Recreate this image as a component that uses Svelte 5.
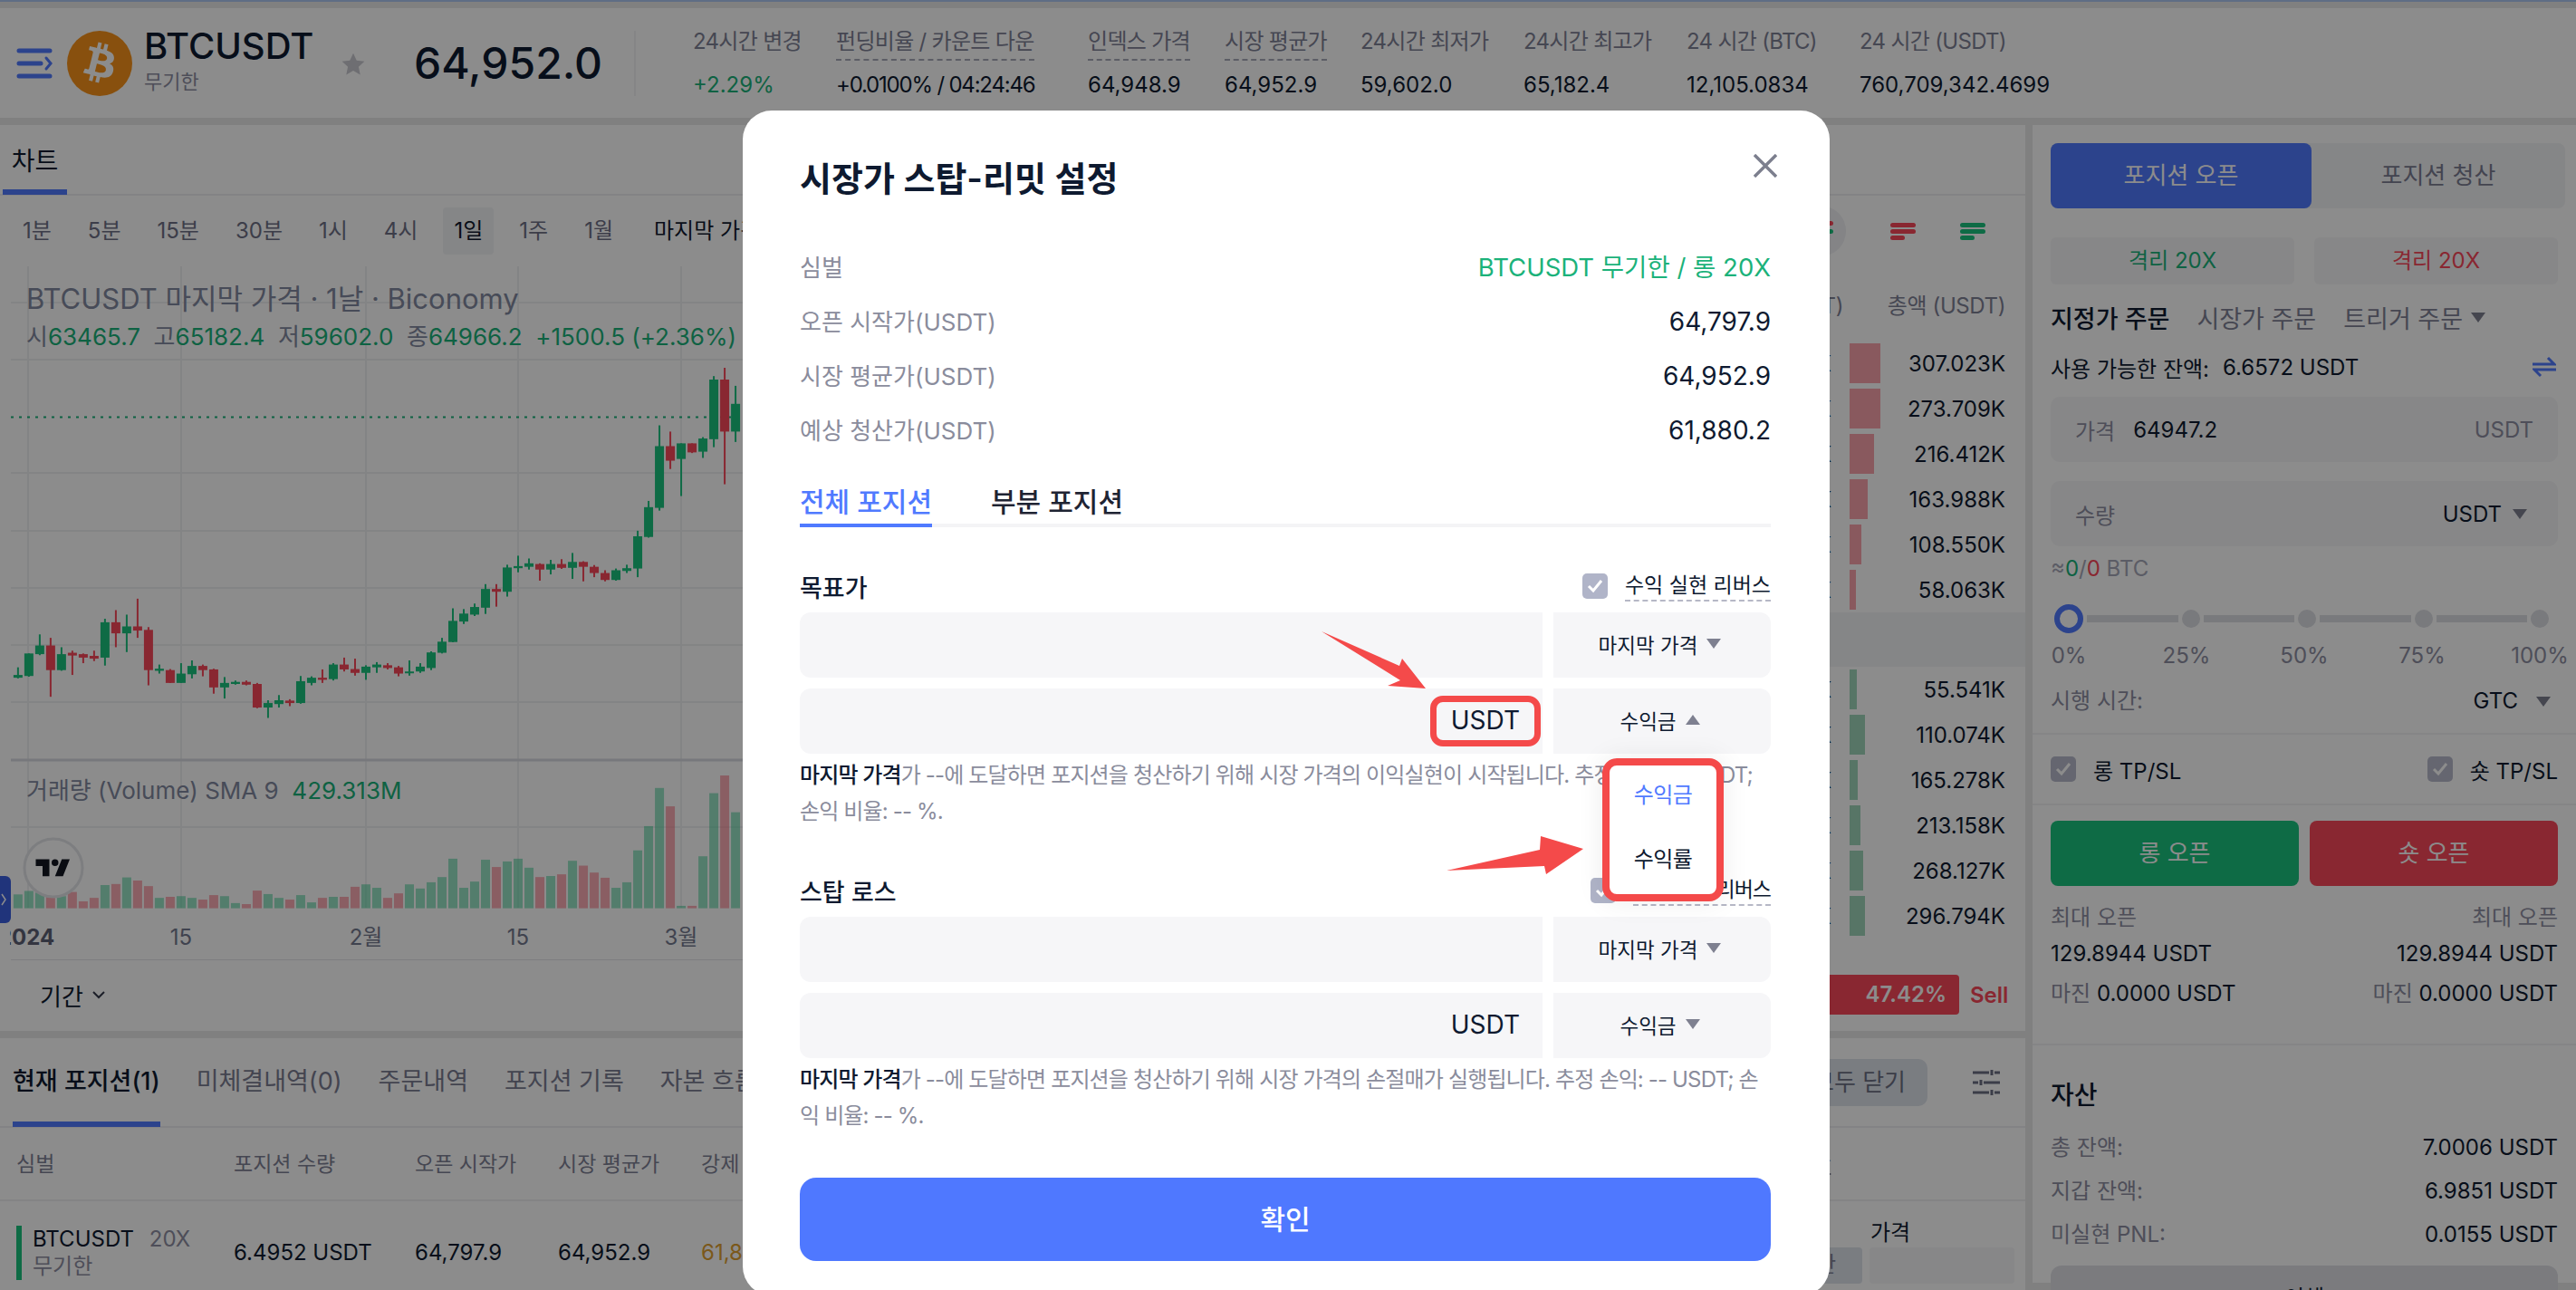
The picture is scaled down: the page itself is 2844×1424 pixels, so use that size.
<script>
  // candles read off the chart: [up, wick top, body top, body bottom, wick bottom], y in zoom units
  const raw = [
    [1,830,852,860,862],[1,790,790,855,857],[1,735,767,792,795],[0,745,767,838,915],[1,772,792,838,840],
    [0,782,788,796,852],[0,790,792,802,818],[0,782,797,805,812],[1,690,700,802,825],[0,665,700,732,772],
    [1,678,712,732,786],[0,632,712,724,745],[0,714,722,838,882],[1,822,834,840,848],[0,835,838,875,875],
    [1,818,848,875,875],[1,810,826,850,862],[0,822,826,838,856],[0,834,836,888,906],[1,858,875,888,920],
    [1,868,872,878,880],[0,868,872,880,882],[0,875,878,946,948],[1,925,933,946,976],[1,910,925,936,946],
    [0,922,926,933,942],[1,855,870,933,935],[1,856,860,875,882],[0,836,860,866,875],[1,818,822,864,868],
    [0,802,822,836,842],[0,805,835,846,854],[1,824,828,846,866],[1,815,822,830,846],[0,818,824,832,836],
    [0,826,830,848,856],[1,810,842,846,854],[1,818,828,842,846],[1,784,787,832,838],[1,745,756,788,790],
    [1,660,696,757,758],[1,662,675,698,705],[1,646,656,678,682],[1,590,604,658,676],[0,590,604,612,655],
    [1,534,542,612,626],[1,508,538,544,556],[1,516,530,540,548],[0,530,532,548,580],[1,520,532,548,562],
    [0,518,532,543,546],[1,500,526,543,575],[0,524,526,540,582],[0,535,540,558,570],[0,550,558,578,582],
    [1,545,550,578,580],[1,534,544,552,558],[1,436,452,545,570],[1,350,368,454,456],[1,132,192,370,378],
    [0,150,192,234,258],[1,184,184,229,336],[0,184,184,210,212],[1,166,170,208,226],[1,-10,0,172,195],
    [0,-34,0,150,302],[1,18,70,150,180]
  ];
  const volTops = [1485,1475,1480,1490,1490,1478,1505,1495,1458,1455,1436,1445,1461,1495,1492,1490,1495,1500,1487,1490,1510,1513,1474,1484,1495,1500,1487,1508,1495,1492,1492,1463,1456,1466,1495,1482,1456,1468,1450,1435,1382,1466,1448,1385,1406,1390,1382,1408,1435,1432,1427,1388,1402,1422,1437,1466,1450,1358,1288,1178,1231,1518,1518,1375,1193,1142,1248];

  const toX = (i) => (38 + i * 22.95) / 1.912;
  const toY = (z) => 420 + z / 2.613;
  const candles = raw.map((c, i) => ({
    x: toX(i), up: c[0], wt: toY(c[1]), bt: toY(c[2]), bb: toY(c[3]), wb: toY(c[4]),
    vt: toY(volTops[i])
  }));
  const volBase = toY(1525);

  const gridY = [335, 398, 523, 587, 650, 713, 776, 914];
  const gridX = [31, 200, 404, 572, 752];

  const times = ['1분', '5분', '15분', '30분', '1시', '4시', '1일', '1주', '1월'];
  const stats = [
    { label: '24시간 변경', value: '+2.29%', w: 158, up: true },
    { label: '펀딩비율 / 카운트 다운', value: '+0.0100% / 04:24:46', w: 278, dash: true, tight: true },
    { label: '인덱스 가격', value: '64,948.9', w: 151, dash: true },
    { label: '시장 평균가', value: '64,952.9', w: 150, dash: true },
    { label: '24시간 최저가', value: '59,602.0', w: 180 },
    { label: '24시간 최고가', value: '65,182.4', w: 180 },
    { label: '24 시간 (BTC)', value: '12,105.0834', w: 191 },
    { label: '24 시간 (USDT)', value: '760,709,342.4699', w: 320 }
  ];
  const asks = [['12.341K', 34, '307.023K'], ['10.402K', 34, '273.709K'], ['9.331K', 27, '216.412K'], ['8.120K', 20, '163.988K'], ['6.402K', 13, '108.550K'], ['3.112K', 7, '58.063K']];
  const bids = [['5.541K', 8, '55.541K'], ['8.433K', 17, '110.074K'], ['5.204K', 9, '165.278K'], ['6.880K', 12, '213.158K'], ['7.011K', 15, '268.127K'], ['9.120K', 17, '296.794K']];
  const info = [
    ['오픈 시작가(USDT)', '64,797.9'],
    ['시장 평균가(USDT)', '64,952.9'],
    ['예상 청산가(USDT)', '61,880.2']
  ];
  const marks = ['0%', '25%', '50%', '75%', '100%'];
</script>

<div class="page">
  <div class="strip"></div>

  <header class="top">
    <svg class="menu" width="40" height="34" viewBox="0 0 40 34" fill="none" stroke="#507aff" stroke-width="5" stroke-linecap="round">
      <path d="M3 3h34M3 17h24M3 31h34" /><path d="M33 11l5 6-5 6" stroke-width="3" />
    </svg>
    <svg class="coin" width="72" height="72" viewBox="0 0 64 64">
      <circle cx="32" cy="32" r="32" fill="#f7931a" />
      <path fill="#fff" d="M46.1 27.4c.6-4.3-2.6-6.6-7-8.1l1.4-5.7-3.5-.9-1.4 5.6c-.9-.2-1.9-.4-2.8-.7l1.4-5.6-3.5-.9-1.4 5.7c-.8-.2-1.5-.3-2.2-.5l-4.8-1.2-.9 3.7s2.6.6 2.5.6c1.4.4 1.7 1.3 1.6 2l-1.6 6.5-2.3 9.1c-.2.4-.6 1.1-1.6.8 0 0-2.5-.6-2.5-.6l-1.7 4 4.5 1.1c.8.2 1.7.4 2.5.6l-1.4 5.8 3.5.9 1.4-5.7c1 .3 1.9.5 2.8.7l-1.4 5.7 3.5.9 1.4-5.8c6 1.1 10.5.7 12.4-4.7 1.5-4.4-.1-6.9-3.2-8.5 2.3-.5 4-2 4.4-5.1zm-8 11.2c-1.1 4.3-8.3 2-10.7 1.4l1.9-7.7c2.4.6 9.9 1.8 8.8 6.3zm1.1-11.3c-1 3.9-7 1.9-9 1.4l1.8-7c2 .5 8.2 1.4 7.2 5.6z" />
    </svg>
    <div class="pair">
      <div class="pair-name">BTCUSDT</div>
      <div class="pair-sub">무기한</div>
    </div>
    <svg class="star" width="28" height="28" viewBox="0 0 24 24"><path fill="#c9c9cf" d="M12 1.5l3.2 6.9 7.4.9-5.5 5.1 1.5 7.4L12 18.1l-6.6 3.7 1.5-7.4-5.5-5.1 7.4-.9z" /></svg>
    <div class="last">64,952.0</div>
    <div class="vline"></div>
    <div class="stats">
      {#each stats as s}
        <div class="stat" style="width:{s.w}px">
          <div class="stat-label"><span class:dash={s.dash}>{s.label}</span></div>
          <div class="stat-value" class:green={s.up} class:tight={s.tight}>{s.value}</div>
        </div>
      {/each}
    </div>
  </header>

  <div class="body">
    <div class="left">
      <section class="chart-panel">
        <div class="tabs">
          <div class="tab-on">차트</div>
        </div>
        <div class="chart-body">
          <div class="chart-col">
            <div class="times">
              {#each times as t}
                <span class="time" class:active={t === '1일'}>{t}</span>
              {/each}
              <span class="time price-type">마지막 가격</span>
            </div>
            <div class="plot">
              <svg width="1856" height="766" viewBox="0 295 1856 766">
                {#each gridY as y}<line x1="12" x2="1856" y1={y} y2={y} stroke="#eff0f3" stroke-width="2" />{/each}
                {#each gridX as x}<line x1={x} x2={x} y1="295" y2="1003" stroke="#eff0f3" stroke-width="2" />{/each}
                <line x1="12" x2="1856" y1="461.5" y2="461.5" stroke="#1bb27a" stroke-width="2" stroke-dasharray="3 6" />
                <line x1="12" x2="1856" y1="840" y2="840" stroke="#d9dbe2" stroke-width="3" />
                <line x1="12" x2="1856" y1="1061" y2="1061" stroke="#e3e4e9" stroke-width="2" />
                {#each candles as c}
                  <rect x={c.x - 5} y={c.vt} width="10" height={volBase - c.vt} fill={c.up ? '#1bc37f' : '#f94759'} fill-opacity="0.45" />
                  <line x1={c.x} x2={c.x} y1={c.wt} y2={c.wb} stroke={c.up ? '#1bc37f' : '#f94759'} stroke-width="2" />
                  <rect x={c.x - 5} y={c.bt} width="10" height={Math.max(c.bb - c.bt, 2)} fill={c.up ? '#1bc37f' : '#f94759'} />
                {/each}
                <g class="axis">
                  <text class="year" x="-2" y="1044">2024</text>
                  <text x="200" y="1044" text-anchor="middle">15</text>
                  <text x="404" y="1044" text-anchor="middle">2월</text>
                  <text x="572" y="1044" text-anchor="middle">15</text>
                  <text x="752" y="1044" text-anchor="middle">3월</text>
                </g>
                <rect x="0" y="1010" width="11" height="50" fill="#fff" />
                <circle cx="59" cy="959" r="32" fill="#fff" stroke="#e4e5ea" stroke-width="3" />
                <path transform="translate(37 942) scale(1.25)" fill="#131722" d="M14 6H2v6h6v9h6V6Zm12 15h-7l6-15h7l-6 15Zm-7-9a3 3 0 1 0 0-6 3 3 0 0 0 0 6Z" />
                <path d="M0 968h6a6 6 0 0 1 6 6v40a6 6 0 0 1-6 6H0z" fill="#3b5fe0" />
                <path d="M2 988l4 6-4 6" fill="none" stroke="#fff" stroke-width="1.5" />
              </svg>
              <div class="legend">
                <div class="legend-title">BTCUSDT 마지막 가격 · 1날 · Biconomy</div>
                <div class="legend-ohlc">시<b>63465.7</b> &nbsp;고<b>65182.4</b> &nbsp;저<b>59602.0</b> &nbsp;종<b>64966.2</b> &nbsp;<b>+1500.5 (+2.36%)</b></div>
              </div>
              <div class="legend-vol">거래량 (Volume) SMA 9 &nbsp;<b>429.313M</b></div>
            </div>
            <div class="range">기간
              <svg width="14" height="10" viewBox="0 0 14 10" fill="none" stroke="#33384a" stroke-width="2"><path d="M1 2l6 6 6-6" /></svg>
            </div>
          </div>

          <aside class="book">
            <div class="book-icons">
              <span class="book-chip"><i class="l r"></i><i class="l g"></i><i class="l s"></i></span>
              <span class="book-ico"><i class="l r"></i><i class="l r"></i><i class="l r s"></i></span>
              <span class="book-ico"><i class="l g"></i><i class="l g"></i><i class="l g s"></i></span>
            </div>
            <div class="book-row book-head"><span class="qty-head">수량 (USDT)</span><div class="book-cell"><span class="book-total">총액 (USDT)</span></div></div>
            {#each asks as a}
              <div class="book-row"><span>{a[0]}</span><div class="book-cell"><i class="bar ask" style="width:{a[1]}px"></i><span class="book-total">{a[2]}</span></div></div>
            {/each}
            <div class="book-mid"></div>
            {#each bids as b}
              <div class="book-row"><span>{b[0]}</span><div class="book-cell"><i class="bar bid" style="width:{b[1]}px"></i><span class="book-total">{b[2]}</span></div></div>
            {/each}
            <div class="ratio">
              <div class="ratio-bar">47.42%</div>
              <span class="ratio-sell">Sell</span>
            </div>
          </aside>
        </div>
      </section>

      <section class="positions">
        <div class="pos-tabs">
          <span class="pos-tab on">현재 포지션(1)</span>
          <span class="pos-tab">미체결내역(0)</span>
          <span class="pos-tab">주문내역</span>
          <span class="pos-tab">포지션 기록</span>
          <span class="pos-tab">자본 흐름</span>
          <span class="close-all">모두 닫기</span>
          <svg class="filter" width="30" height="28" viewBox="0 0 30 28" fill="none" stroke="#6c7084" stroke-width="3">
            <path d="M0 3h18M24 3h6M0 14h6M12 14h18M0 25h18M24 25h6" /><path d="M21 0v6M9 11v6M21 22v6" />
          </svg>
        </div>
        <div class="pos-grid pos-head">
          <span>심벌</span><span>포지션 수량</span><span>오픈 시작가</span><span>시장 평균가</span><span>강제 청산가</span>
          <span class="pos-end"><u>청산</u></span>
        </div>
        <div class="pos-grid pos-row">
          <div class="sym">
            <i class="sym-bar"></i>
            <div><div>BTCUSDT <em>20X</em></div><div class="sym-sub">무기한</div></div>
          </div>
          <span>6.4952 USDT</span><span>64,797.9</span><span>64,952.9</span><span class="orange">61,880.2</span>
          <div class="pos-act">
            <span class="act-btn">청산</span>
            <div class="act-price">
              <span class="act-label">가격</span>
              <span class="act-input"></span>
            </div>
          </div>
        </div>
      </section>
    </div>

    <aside class="right">
      <div class="order">
        <div class="toggle">
          <span class="toggle-on">포지션 오픈</span>
          <span class="toggle-off">포지션 청산</span>
        </div>
        <div class="margins">
          <span class="margin-btn green">격리 20X</span>
          <span class="margin-btn red">격리 20X</span>
        </div>
        <div class="kinds">
          <span class="kind on">지정가 주문</span>
          <span class="kind">시장가 주문</span>
          <span class="kind">트리거 주문</span><i class="caret dark-c"></i>
        </div>
        <div class="avail">
          <span>사용 가능한 잔액:</span><span class="avail-val">6.6572 USDT</span>
          <svg class="swap" width="26" height="24" viewBox="0 0 26 24" fill="none" stroke="#507aff" stroke-width="3">
            <path d="M0 9h24L17 2M26 15H2l7 7" />
          </svg>
        </div>
        <div class="field"><span class="field-label">가격</span><span class="field-val">64947.2</span><span class="field-unit">USDT</span></div>
        <div class="field second"><span class="field-label">수량</span><span class="field-pick">USDT</span><i class="caret"></i></div>
        <div class="approx">≈<span class="green">0</span>/<span class="red">0</span> BTC</div>
        <div class="slider">
          <i class="thumb"></i>
          {#each [1, 2, 3, 4] as n}<i class="seg"></i><i class="dot"></i>{/each}
        </div>
        <div class="marks">
          {#each marks as m}<span class="mark">{m}</span>{/each}
        </div>
        <div class="tif"><span class="muted">시행 시간:</span><span class="tif-val">GTC</span><i class="caret"></i></div>
      </div>

      <div class="tpsl">
        <label class="chk"><i class="box"><svg width="18" height="16" viewBox="0 0 18 16" fill="none" stroke="#fff" stroke-width="3"><path d="M2 8l5 5 9-11" /></svg></i>롱 TP/SL</label>
        <label class="chk"><i class="box"><svg width="18" height="16" viewBox="0 0 18 16" fill="none" stroke="#fff" stroke-width="3"><path d="M2 8l5 5 9-11" /></svg></i>숏 TP/SL</label>
      </div>

      <div class="trade">
        <div class="trade-btns">
          <span class="trade-btn long">롱 오픈</span>
          <span class="trade-btn short">숏 오픈</span>
        </div>
        <div class="kv top-kv"><span class="muted">최대 오픈</span><span class="muted">최대 오픈</span></div>
        <div class="kv"><span>129.8944 USDT</span><span>129.8944 USDT</span></div>
        <div class="kv"><span><span class="muted">마진</span> 0.0000 USDT</span><span><span class="muted">마진</span> 0.0000 USDT</span></div>
      </div>

      <div class="assets">
        <div class="assets-title">자산</div>
        <div class="kv"><span class="muted">총 잔액:</span><span>7.0006 USDT</span></div>
        <div class="kv"><span class="muted">지갑 잔액:</span><span>6.9851 USDT</span></div>
        <div class="kv"><span class="muted">미실현 PNL:</span><span>0.0155 USDT</span></div>
        <div class="transfer">이체</div>
      </div>
    </aside>
  </div>

  <div class="overlay"></div>

  <div class="modal">
    <div class="m-head">
      <h2>시장가 스탑-리밋 설정</h2>
      <svg class="m-close" width="26" height="26" viewBox="0 0 26 26" fill="none" stroke="#7c7f8e" stroke-width="3.4"><path d="M1 1l24 24M25 1L1 25" /></svg>
    </div>
    <div class="m-row"><span class="m-label">심벌</span><span class="m-symbol">BTCUSDT 무기한 / 롱 20X</span></div>
    {#each info as r}
      <div class="m-row"><span class="m-label">{r[0]}</span><span class="m-val">{r[1]}</span></div>
    {/each}
    <div class="m-tabs">
      <span class="m-tab on">전체 포지션</span>
      <span class="m-tab">부분 포지션</span>
    </div>

    <div class="m-sec first">
      <span class="m-title">목표가</span>
      <span class="m-check"><i class="m-box"><svg width="18" height="16" viewBox="0 0 18 16" fill="none" stroke="#fff" stroke-width="3"><path d="M2 8l5 5 9-11" /></svg></i><span class="m-rev">수익 실현 리버스</span></span>
    </div>
    <div class="m-input"><span class="m-field"></span><span class="m-pick">마지막 가격<i class="caret"></i></span></div>
    <div class="m-input"><span class="m-field"><span class="boxed">USDT</span></span><span class="m-pick">수익금<i class="caret up"></i></span></div>
    <p class="m-note"><b>마지막 가격</b>가 --에 도달하면 포지션을 청산하기 위해 시장 가격의 이익실현이 시작됩니다. 추정 이익: -- USDT; 손익 비율: -- %.</p>

    <div class="m-sec">
      <span class="m-title">스탑 로스</span>
      <span class="m-check"><i class="m-box"><svg width="18" height="16" viewBox="0 0 18 16" fill="none" stroke="#fff" stroke-width="3"><path d="M2 8l5 5 9-11" /></svg></i><span class="m-rev tight">손절 실현 리버스</span></span>
    </div>
    <div class="m-input"><span class="m-field"></span><span class="m-pick">마지막 가격<i class="caret"></i></span></div>
    <div class="m-input"><span class="m-field"><span>USDT</span></span><span class="m-pick">수익금<i class="caret"></i></span></div>
    <p class="m-note"><b>마지막 가격</b>가 --에 도달하면 포지션을 청산하기 위해 시장 가격의 손절매가 실행됩니다. 추정 손익: -- USDT; 손익 비율: -- %.</p>

    <button class="m-confirm">확인</button>

    <div class="drop">
      <span class="drop-opt on">수익금</span>
      <span class="drop-opt">수익률</span>
    </div>
  </div>

  <svg class="marks-layer" width="2844" height="1424" viewBox="0 0 2844 1424">
    <polygon fill="#f44a4a" points="1459,697 1545,735 1548,727 1574,760 1532,757 1546,751" />
    <polygon fill="#f44a4a" points="1597,961 1700,938 1701,923 1748,937 1707,965 1705,956" />
  </svg>
</div>

<style>
  :global(body) {
    margin: 0;
    font-family: Inter, "Noto Sans CJK KR", sans-serif;
    color: #0e1a30;
  }

  .page {
    position: relative;
    width: 2844px;
    height: 1424px;
    overflow: hidden;
    background: #e9e9e9;
    font-size: 24px;
  }

  .strip {
    height: 2px;
    margin-bottom: 7px;
    background: #aec6f2;
  }

  .top {
    display: flex;
    align-items: center;
    height: 121px;
    background: #fff;
  }

  .menu { margin-left: 18px; }
  .coin { margin-left: 16px; }

  .pair { margin-left: 13px; width: 219px; }
  .pair-name { font-size: 40px; line-height: 46px; font-weight: 500; margin-top: -5px; }
  .pair-sub { font-size: 22px; line-height: 32px; color: #8e8fa3; }

  .star { margin-left: -2px; margin-top: 2px; }

  .last {
    margin-left: 53px;
    width: 243px;
    font-size: 48px;
    font-weight: 500;
  }

  .vline {
    width: 2px;
    height: 72px;
    background: #f3f3f5;
  }

  .stats { display: flex; margin-left: 63px; }
  .stat { flex: none; }
  .stat-label { height: 48px; color: #7f8196; line-height: 34px; white-space: nowrap; letter-spacing: -0.7px; }
  .stat-label span { display: inline-block; padding-bottom: 2px; }
  .stat-label .dash { border-bottom: 2px dashed #a8a9b8; }
  .stat-value { line-height: 34px; white-space: nowrap; }
  .stat-value.tight { letter-spacing: -1.2px; }

  .green { color: #1bb27a; }
  .red { color: #f94759; }
  .muted { color: #8e8fa3; }

  .body {
    display: flex;
    gap: 8px;
    margin-top: 8px;
  }

  .left {
    width: 2236px;
    display: flex;
    flex-direction: column;
    gap: 8px;
  }

  .chart-panel {
    height: 1000px;
    background: #fff;
  }

  .tabs {
    height: 78px;
    box-sizing: border-box;
    border-bottom: 2px solid #eeeff2;
    padding-left: 3px;
  }

  .tab-on {
    width: 71px;
    height: 77px;
    margin-bottom: -1px;
    box-sizing: border-box;
    padding-top: 21px;
    text-align: center;
    font-size: 28px;
    line-height: 38px;
    border-bottom: 6px solid #507aff;
  }

  .chart-body { display: flex; }
  .chart-col { width: 1856px; flex: none; }

  .times {
    display: flex;
    align-items: center;
    gap: 16px;
    height: 78px;
    padding-left: 13px;
    color: #6e7086;
  }

  .time {
    padding: 0 12px;
    height: 52px;
    line-height: 52px;
    border-radius: 4px;
    white-space: nowrap;
  }

  .time.active { background: #f3f4f6; color: #11192e; }
  .time.price-type { color: #11192e; margin-left: 17px; padding: 0; }

  .plot {
    position: relative;
    height: 766px;
  }

  .plot svg { display: block; }

  .axis text {
    font-size: 24px;
    fill: #767b90;
    font-family: Inter, "Noto Sans CJK KR", sans-serif;
  }

  .axis .year { font-weight: 700; fill: #5d6276; }

  .legend {
    position: absolute;
    left: 29px;
    top: 16px;
  }

  .legend-title {
    font-size: 31px;
    line-height: 40px;
    color: #8289a0;
    white-space: nowrap;
  }

  .legend-ohlc {
    margin-top: 4px;
    font-size: 26px;
    line-height: 36px;
    color: #8289a0;
    white-space: nowrap;
  }

  .legend-ohlc b, .legend-vol b { font-weight: 400; color: #1bb27a; }

  .legend-vol {
    position: absolute;
    left: 29px;
    top: 562px;
    font-size: 26px;
    line-height: 34px;
    color: #8289a0;
    white-space: nowrap;
  }

  .range {
    display: flex;
    align-items: center;
    gap: 10px;
    height: 76px;
    padding-left: 44px;
    font-size: 26px;
  }

  .book {
    width: 358px;
    padding-right: 22px;
    box-sizing: content-box;
    flex: none;
  }

  .book-icons {
    display: flex;
    justify-content: flex-end;
    align-items: center;
    gap: 49px;
    height: 78px;
    padding-right: 44px;
    margin-right: -22px;
  }

  .book-icons i.l { display: block; width: 28px; height: 5px; border-radius: 3px; margin: 2px 0; }
  .book-icons i.r { background: #f94759; }
  .book-icons i.g { background: #1bc37f; }
  .book-icons i.s { width: 16px; }

  .book-chip {
    display: flex;
    flex-direction: column;
    justify-content: center;
    align-items: center;
    width: 56px;
    height: 56px;
    margin-left: -14px;
    border-radius: 50%;
    background: #f0f1f4;
  }

  .book-chip i.s { background: #c4c5ce; }

  .book-row {
    display: grid;
    grid-template-columns: 166px 172px;
    gap: 20px;
    align-items: center;
    height: 50px;
    text-align: right;
    white-space: nowrap;
  }

  .book-row > span { justify-self: end; }

  .book-head {
    color: #7f8196;
    padding-bottom: 17px;
    box-sizing: content-box;
    height: 48px;
    margin-top: 17px;
    letter-spacing: -0.4px;
  }

  .qty-head { margin-right: -13px; }

  .book-cell { display: flex; align-items: center; height: 44px; }
  .book-total { margin-left: auto; }
  .bar { display: block; height: 44px; }
  .bar.ask { background: #f9a3ab; }
  .bar.bid { background: #9fd6ba; }

  .book-mid {
    height: 60px;
    background: #f3f4f6;
    margin-right: -22px;
  }

  .ratio {
    display: flex;
    align-items: center;
    justify-content: flex-end;
    height: 44px;
    margin-top: 40px;
    gap: 12px;
  }

  .ratio-bar {
    width: 220px;
    height: 44px;
    line-height: 44px;
    padding-right: 14px;
    box-sizing: border-box;
    text-align: right;
    color: #fff;
    font-weight: 600;
    background: #f94759;
    border-radius: 0 4px 4px 0;
  }

  .ratio-sell { color: #f94759; font-weight: 600; width: 39px; }

  .positions {
    height: 278px;
    background: #fff;
  }

  .pos-tabs {
    display: flex;
    align-items: center;
    height: 99px;
    box-sizing: border-box;
    border-bottom: 2px solid #eeeff2;
    padding-left: 14px;
    gap: 40px;
    font-size: 27px;
    color: #7b7d92;
    white-space: nowrap;
  }

  .pos-tab { height: 99px; line-height: 98px; box-sizing: border-box; }
  .pos-tab.on { color: #0e1a30; border-bottom: 6px solid #507aff; font-weight: 500; }

  .close-all {
    margin-left: auto;
    height: 52px;
    line-height: 52px;
    padding: 0 24px;
    font-size: 26px;
    background: #dfe3ec;
    border-radius: 10px;
    color: #6c7084;
  }

  .filter { margin: 0 28px 0 10px; flex: none; }

  .pos-grid {
    display: grid;
    grid-template-columns: 240px 200px 158px 158px 1246px 216px;
    padding-left: 18px;
    white-space: nowrap;
  }

  .pos-head {
    height: 81px;
    line-height: 80px;
    font-size: 23px;
    color: #7f8196;
    border-bottom: 2px solid #f0f1f3;
    box-sizing: border-box;
  }

  .pos-end { text-align: left; color: #7f8196; margin-left: -41px; }

  .pos-row {
    height: 98px;
    box-sizing: border-box;
    padding-top: 15px;
    align-items: center;
    background: #fff;
  }

  .sym { display: flex; align-items: center; gap: 12px; line-height: 30px; }
  .sym-bar { width: 6px; height: 60px; background: #1bc37f; }
  .sym em { font-style: normal; color: #8e8fa3; margin-left: 10px; }
  .sym-sub { color: #8e8fa3; }
  .orange { color: #e0a030; }

  .pos-act {
    display: flex;
    gap: 8px;
    align-self: end;
    margin-left: -20px;
    margin-bottom: 7px;
    height: 60px;
    align-items: flex-end;
  }

  .act-btn {
    flex: none;
    width: 56px;
    height: 40px;
    line-height: 38px;
    box-sizing: border-box;
    padding-right: 29px;
    background: #dfe3ec;
    border-radius: 4px;
    text-align: right;
    color: #7f8196;
    overflow: hidden;
    direction: rtl;
  }

  .act-price { position: relative; }
  .act-label { position: absolute; top: -36px; left: 1px; }
  .act-input { display: block; width: 160px; height: 40px; background: #f6f6f8; border-radius: 4px; }

  .right {
    width: 600px;
    height: 1278px;
    background: #fff;
    padding: 0 20px;
    box-sizing: border-box;
  }

  .order { height: 673px; padding-top: 20px; box-sizing: border-box; border-bottom: 2px solid #f3f3f5; margin: 0 -20px; padding-left: 20px; padding-right: 20px; }

  .toggle {
    display: flex;
    width: 568px;
    height: 72px;
    background: #f3f4f6;
    border-radius: 8px;
    text-align: center;
    line-height: 72px;
    font-size: 26px;
  }

  .toggle-on { width: 288px; background: #507aff; color: #fff; border-radius: 8px; }
  .toggle-off { flex: 1; color: #7b7d92; }

  .margins {
    display: flex;
    justify-content: space-between;
    width: 560px;
    margin-top: 32px;
  }

  .margin-btn {
    width: 269px;
    height: 52px;
    line-height: 52px;
    text-align: center;
    background: #f6f6f8;
    border-radius: 6px;
  }

  .kinds {
    display: flex;
    align-items: center;
    height: 40px;
    margin-top: 16px;
    gap: 30px;
    font-size: 27px;
    color: #7f8196;
  }

  .kind.on { color: #0e1a30; font-weight: 500; }
  .dark-c { margin-left: -21px; }

  .caret {
    display: inline-block;
    width: 0;
    height: 0;
    border-left: 8px solid transparent;
    border-right: 8px solid transparent;
    border-top: 11px solid #7e8090;
  }

  .caret.up {
    border-top: none;
    border-bottom: 11px solid #7e8090;
  }

  .avail {
    display: flex;
    align-items: center;
    width: 560px;
    height: 40px;
    margin-top: 15px;
  }

  .avail-val { margin-left: 15px; }
  .swap { margin-left: auto; margin-right: 2px; }

  .field {
    display: flex;
    align-items: center;
    width: 560px;
    height: 72px;
    margin-top: 13px;
    padding: 0 27px;
    box-sizing: border-box;
    background: #f6f6f8;
    border-radius: 10px;
  }

  .field.second { margin-top: 21px; padding-right: 34px; }
  .field-label { color: #8e8fa3; }
  .field-val { margin-left: 20px; }
  .field-unit { margin-left: auto; color: #8e8fa3; }
  .field-pick { margin-left: auto; margin-right: 12px; }

  .approx { margin-top: 10px; line-height: 30px; color: #a6a8b8; }

  .slider {
    display: flex;
    align-items: center;
    height: 32px;
    width: 546px;
    margin-left: 4px;
    margin-top: 24px;
  }

  .thumb { flex: none; width: 32px; height: 32px; box-sizing: border-box; border: 6px solid #507aff; border-radius: 50%; background: #fff; }
  .dot { flex: none; width: 20px; height: 20px; border-radius: 50%; background: #dddee3; }
  .seg { flex: 1; height: 8px; margin: 0 4px; background: #dddee3; }

  .marks {
    display: flex;
    gap: 90px;
    margin-top: 9px;
    line-height: 32px;
    color: #8e8fa3;
  }

  .mark { flex: 0 0 40px; min-width: 0; display: flex; justify-content: center; white-space: nowrap; }

  .tif {
    display: flex;
    align-items: center;
    width: 560px;
    margin-top: 18px;
    line-height: 32px;
  }

  .tif-val { margin-left: auto; margin-right: 20px; }
  .tif .caret { margin-right: 8px; }

  .tpsl {
    display: flex;
    justify-content: space-between;
    align-items: center;
    width: 560px;
    height: 76px;
  }

  .chk { display: flex; align-items: center; gap: 19px; }

  .box {
    display: flex;
    align-items: center;
    justify-content: center;
    width: 28px;
    height: 28px;
    border-radius: 5px;
    background: #b9bbcc;
  }

  .trade { margin: 0 -20px; padding: 17px 20px 0; height: 267px; box-sizing: border-box; border-top: 2px solid #f3f3f5; border-bottom: 2px solid #f3f3f5; }

  .trade-btns { display: flex; gap: 12px; width: 560px; }

  .trade-btn {
    flex: 1;
    height: 72px;
    line-height: 72px;
    text-align: center;
    font-size: 26px;
    color: #fff;
    border-radius: 8px;
  }

  .long { background: #1bc37f; }
  .short { background: #f94759; }

  .kv {
    display: flex;
    justify-content: space-between;
    width: 560px;
    height: 44px;
    line-height: 44px;
    white-space: nowrap;
  }

  .top-kv { margin-top: 13px; height: 40px; line-height: 44px; }

  .assets-title {
    margin-top: 33px;
    margin-bottom: 12px;
    font-size: 28px;
    line-height: 44px;
    font-weight: 500;
  }

  .assets .kv { height: 48px; line-height: 48px; }

  .transfer {
    width: 560px;
    height: 72px;
    margin-top: 10px;
    line-height: 72px;
    text-align: center;
    background: #e0e1e6;
    border-radius: 12px;
  }

  .overlay {
    position: absolute;
    inset: 0;
    background: rgba(0, 0, 0, 0.45);
  }

  .modal {
    position: absolute;
    left: 820px;
    top: 122px;
    width: 1200px;
    height: 1308px;
    box-sizing: border-box;
    padding: 0 65px 0 63px;
    background: #fff;
    border-radius: 32px;
    font-size: 26px;
  }

  .m-head {
    display: flex;
    justify-content: space-between;
    height: 141px;
    padding-top: 50px;
    box-sizing: border-box;
  }

  .m-head h2 {
    margin: 0;
    font-size: 38px;
    line-height: 50px;
    font-weight: 600;
  }

  .m-close { margin-top: -2px; margin-right: -7px; }

  .m-row {
    display: flex;
    justify-content: space-between;
    align-items: center;
    height: 60px;
  }

  .m-label { color: #8a8c9c; }
  .m-symbol { color: #1bb27a; font-size: 27.5px; }
  .m-val { font-size: 28px; padding-top: 3px; }

  .m-tabs {
    display: flex;
    gap: 65px;
    height: 56px;
    margin-top: 23px;
    box-sizing: border-box;
    border-bottom: 4px solid #f4f4f6;
    font-size: 30px;
    font-weight: 500;
    color: #1f2433;
  }

  .m-tab { height: 56px; box-sizing: border-box; line-height: 56px; }
  .m-tab.on { color: #507aff; border-bottom: 4px solid #507aff; }

  .m-sec {
    display: flex;
    justify-content: space-between;
    align-items: center;
    height: 38px;
    margin-top: 48px;
    margin-bottom: 10px;
  }

  .m-sec.first { margin-top: 46px; }

  .m-title { font-size: 27px; font-weight: 500; }

  .m-check { display: flex; align-items: center; gap: 19px; font-size: 23px; }

  .m-box {
    display: flex;
    align-items: center;
    justify-content: center;
    width: 28px;
    height: 28px;
    border-radius: 5px;
    background: #b0b4c8;
  }

  .m-rev { border-bottom: 2px dashed #b6b8c6; line-height: 32px; }
  .m-rev.tight { letter-spacing: -1px; }

  .m-input {
    display: grid;
    grid-template-columns: 820px 240px;
    gap: 12px;
    height: 72px;
    margin-bottom: 12px;
  }

  .m-field {
    display: flex;
    align-items: center;
    justify-content: flex-end;
    padding: 0 25px 3px 0;
    font-size: 28px;
    background: #f6f6f8;
    border-radius: 12px 0 0 12px;
  }

  .m-pick {
    display: flex;
    align-items: center;
    justify-content: center;
    gap: 10px;
    padding: 0 5px 3px 0;
    box-sizing: border-box;
    font-size: 22.5px;
    background: #f6f6f8;
    border-radius: 0 12px 12px 0;
  }

  .boxed { position: relative; }

  .boxed::after {
    content: "";
    position: absolute;
    left: -23px;
    right: -23px;
    top: -10px;
    bottom: -12px;
    border: 7px solid #f44a4a;
    border-radius: 14px;
  }

  .m-note {
    margin: -8px 0 0;
    font-size: 24px;
    line-height: 40px;
    letter-spacing: -0.85px;
    color: #8a8c9c;
    word-break: break-all;
  }

  .m-note b { font-weight: 500; color: #0e1a30; }

  .m-confirm {
    display: block;
    width: 1072px;
    height: 92px;
    margin-top: 48px;
    padding: 0 0 4px;
    border: 0;
    border-radius: 18px;
    background: #4f78ff;
    color: #fff;
    font-family: inherit;
    font-size: 30px;
    font-weight: 500;
  }

  .drop {
    position: absolute;
    left: 949px;
    top: 715px;
    width: 134px;
    height: 158px;
    box-sizing: border-box;
    border: 8px solid #f44a4a;
    border-radius: 16px;
    background: #fff;
    display: flex;
    flex-direction: column;
    align-items: center;
    box-shadow: 0 0 30px rgba(0, 0, 0, 0.08);
  }

  .drop-opt { height: 71px; line-height: 71px; font-size: 24px; letter-spacing: -0.5px; }
  .drop-opt.on { color: #507aff; margin-top: -3px; }

  .marks-layer {
    position: absolute;
    left: 0;
    top: 0;
    pointer-events: none;
  }
</style>
